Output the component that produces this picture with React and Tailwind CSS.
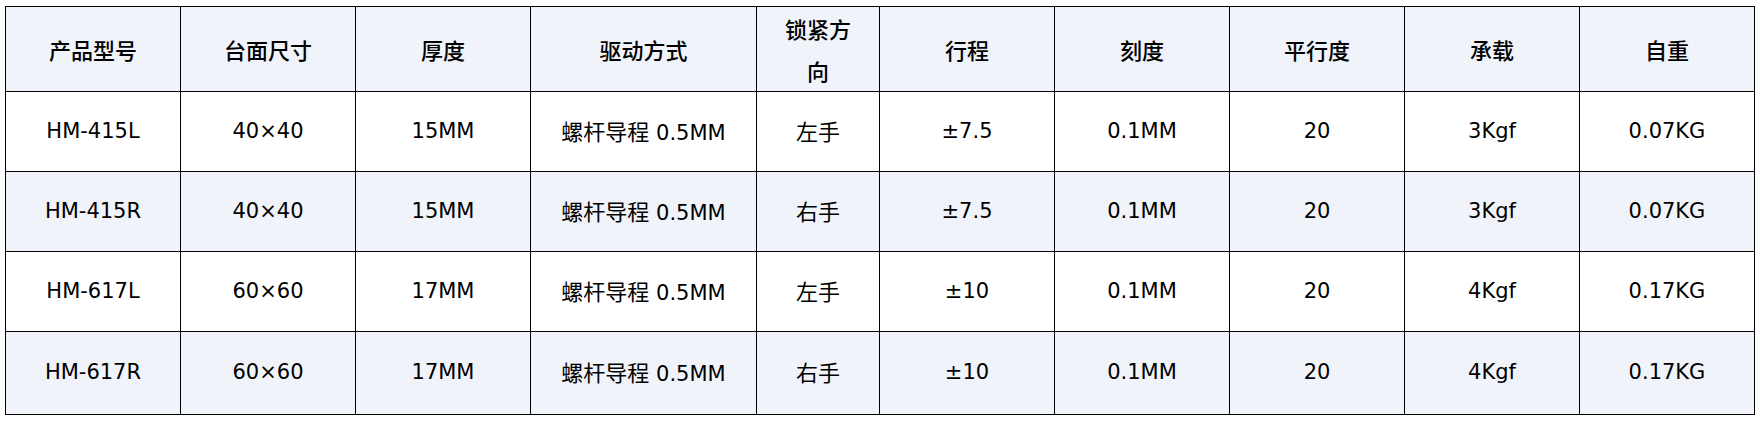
import React from 'react';

const cols = [175, 175, 175, 226, 123, 175, 175, 175, 175, 175];

const headers = ['产品型号', '台面尺寸', '厚度', '驱动方式', '锁紧方向', '行程', '刻度', '平行度', '承载', '自重'];

const rows = [
  ['HM-415L', '40×40', '15MM', '0.5MM', '左手', '±7.5', '0.1MM', '20', '3Kgf', '0.07KG'],
  ['HM-415R', '40×40', '15MM', '0.5MM', '右手', '±7.5', '0.1MM', '20', '3Kgf', '0.07KG'],
  ['HM-617L', '60×60', '17MM', '0.5MM', '左手', '±10', '0.1MM', '20', '4Kgf', '0.17KG'],
  ['HM-617R', '60×60', '17MM', '0.5MM', '右手', '±10', '0.1MM', '20', '4Kgf', '0.17KG'],
];

const rowHeights = ['h-[80px]', 'h-[80px]', 'h-[80px]', 'h-[83px]'];

const cjk = "font-['Noto_Sans_CJK_SC',sans-serif] text-[22px]";

function Cell({ value, index }) {
  if (index === 3) {
    return (
      <span>
        <span className={cjk}>螺杆导程</span> {value}
      </span>
    );
  }
  if (index === 4) {
    return <span className={cjk}>{value}</span>;
  }
  return value;
}

export default function App() {
  return (
    <div className="bg-white min-h-[421px] pl-[5px] pt-[6px]">
      <table className="table-fixed border-collapse w-[1750px] text-black font-['DejaVu_Sans','Noto_Sans_CJK_SC',sans-serif] text-[21px]">
        <colgroup>
          {cols.map((w, i) => (
            <col key={i} style={{ width: w }} />
          ))}
        </colgroup>
        <thead>
          <tr className="h-[85px] bg-[#f0f3f9]">
            {headers.map((h) => (
              <th
                key={h}
                className={`border border-black px-5 text-center align-middle font-medium leading-[42px] ${cjk}`}
              >
                {h}
              </th>
            ))}
          </tr>
        </thead>
        <tbody>
          {rows.map((r, ri) => (
            <tr key={ri} className={`${rowHeights[ri]} ${ri % 2 === 1 ? 'bg-[#f0f3f9]' : 'bg-white'}`}>
              {r.map((v, ci) => (
                <td key={ci} className="border border-black px-3 text-center align-middle">
                  <Cell value={v} index={ci} />
                </td>
              ))}
            </tr>
          ))}
        </tbody>
      </table>
    </div>
  );
}
